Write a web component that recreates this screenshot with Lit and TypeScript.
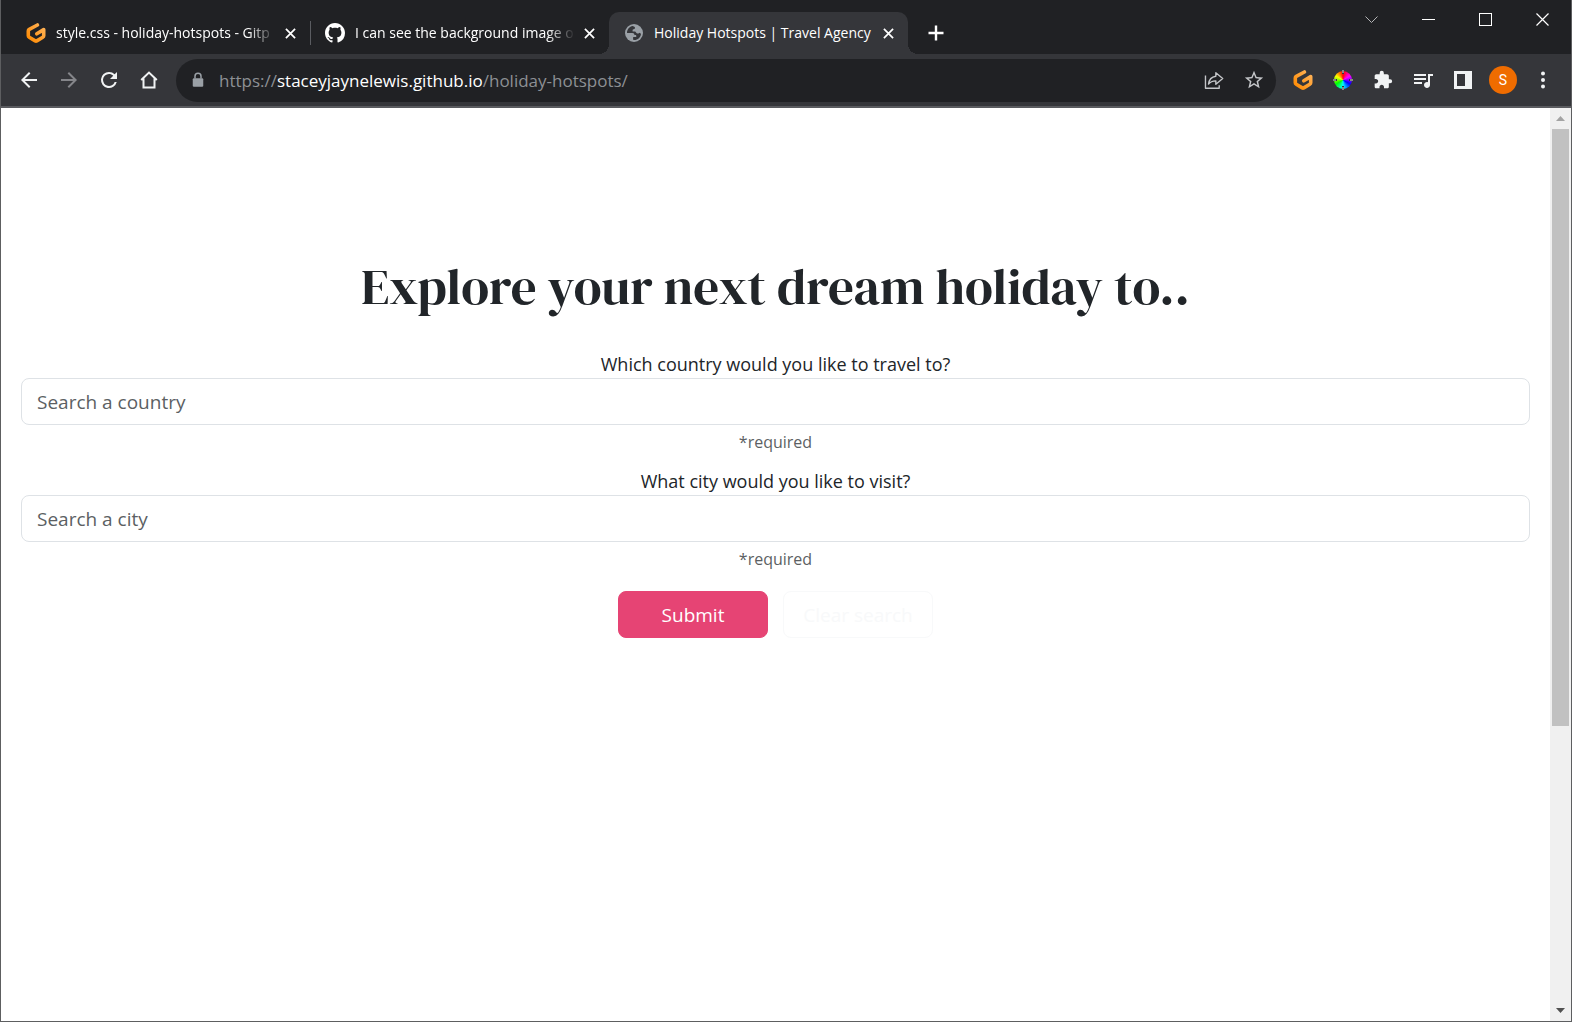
import { LitElement, html, svg, css, type TemplateResult } from "lit";
import { customElement, property, state } from "lit/decorators.js";

const material = (d: string) => svg`<path fill="currentColor" d=${d}></path>`;

const ICONS: Record<string, { box: string; body: TemplateResult<2> }> = {
  back: {
    box: "0 0 24 24",
    body: material("M20 11H7.83l5.59-5.59L12 4l-8 8 8 8 1.41-1.41L7.83 13H20v-2z"),
  },
  forward: {
    box: "0 0 24 24",
    body: material("M4 11h12.17l-5.59-5.59L12 4l8 8-8 8-1.41-1.41L16.17 13H4v-2z"),
  },
  reload: {
    box: "0 0 24 24",
    body: material(
      "M17.65 6.35A7.96 7.96 0 0 0 12 4a8 8 0 1 0 7.73 10h-2.08A6 6 0 1 1 12 6c1.66 0 3.14.69 4.22 1.78L13 11h7V4l-2.35 2.35z",
    ),
  },
  home: {
    box: "0 0 24 24",
    body: svg`<path fill="none" stroke="currentColor" stroke-width="2" d="M4.2 12 12 4.6 19.8 12M6.5 10.5V19.6H17.5V10.5"></path>`,
  },
  lock: {
    box: "0 0 24 24",
    body: svg`<rect x="5" y="9.500" width="14" height="11.500" rx="1.500" fill="currentColor"></rect><path fill="none" stroke="currentColor" stroke-width="2" d="M8 10V7a4 4 0 0 1 8 0v3"></path>`,
  },
  share: {
    box: "0 0 24 24",
    body: svg`<path fill="none" stroke="currentColor" stroke-width="1.500" stroke-linejoin="round" d="M2.700 7v14h15v-3.400M14 4l7.500 6.300-7.500 6.300v-3.700c-3.300 0-6 .9-8 3.600.6-4.800 3.500-8 8-8.600z"></path>`,
  },
  star: {
    box: "0 0 24 24",
    body: material(
      "M22 9.240l-7.190-.62L12 2 9.190 8.630 2 9.240l5.460 4.730L5.820 21 12 17.270 18.180 21l-1.630-7.030L22 9.240zM12 15.400l-3.760 2.270 1-4.280-3.320-2.880 4.380-.38L12 6.100l1.710 4.040 4.380.38-3.320 2.880 1 4.280L12 15.400z",
    ),
  },
  puzzle: {
    box: "0 0 24 24",
    body: material(
      "M20.500 11H19V7c0-1.100-.9-2-2-2h-4V3.500a2.500 2.500 0 0 0-5 0V5H4c-1.100 0-1.990.9-1.990 2v3.800H3.500c1.490 0 2.700 1.210 2.700 2.700s-1.210 2.700-2.700 2.700H2V20c0 1.100.9 2 2 2h3.800v-1.500c0-1.490 1.210-2.700 2.700-2.700s2.700 1.210 2.700 2.700V22H17c1.100 0 2-.9 2-2v-4h1.500a2.500 2.500 0 0 0 0-5z",
    ),
  },
  queue: {
    box: "0 0 24 24",
    body: material(
      "M15 6H3v2h12V6zm0 4H3v2h12v-2zM3 16h8v-2H3v2zM17 6v8.180c-.31-.11-.65-.18-1-.18-1.660 0-3 1.340-3 3s1.340 3 3 3 3-1.340 3-3V8h3V6h-5z",
    ),
  },
  panel: {
    box: "0 0 18 18",
    body: svg`<path fill="currentColor" fill-rule="evenodd" d="M0 0h18v18H0zM3 3v12h8V3z"></path>`,
  },
  dots: {
    box: "0 0 24 24",
    body: svg`<g fill="currentColor"><circle cx="12" cy="5.500" r="2"></circle><circle cx="12" cy="12" r="2"></circle><circle cx="12" cy="18.500" r="2"></circle></g>`,
  },
  close: {
    box: "0 0 12 12",
    body: svg`<path stroke="currentColor" stroke-width="1.900" d="M1 1l10 10M11 1L1 11"></path>`,
  },
  plus: {
    box: "0 0 16 16",
    body: svg`<path stroke="currentColor" stroke-width="2.400" d="M8 0.500v15M0.500 8h15"></path>`,
  },
  chevron: {
    box: "0 0 13 13",
    body: svg`<path fill="none" stroke="currentColor" d="M0.500 3.500l6 6 6-6"></path>`,
  },
  minimize: { box: "0 0 13 13", body: svg`<path fill="currentColor" d="M0 6h13v1H0z"></path>` },
  maximize: {
    box: "0 0 13 13",
    body: svg`<rect x="0.500" y="0.500" width="12" height="12" fill="none" stroke="currentColor"></rect>`,
  },
  exit: {
    box: "0 0 13 13",
    body: svg`<path stroke="currentColor" stroke-width="1.200" d="M0.500 0.500l12 12M12.500 0.500l-12 12"></path>`,
  },
  gitpod: {
    box: "0 0 20 20",
    body: svg`<defs><linearGradient id="g" x1="1" y1="0" x2="0" y2="1"><stop offset="0" stop-color="#ffb45b"></stop><stop offset="1" stop-color="#ff8a00"></stop></linearGradient></defs><path fill="none" stroke="url(#g)" stroke-width="3.600" stroke-linejoin="round" stroke-linecap="round" d="M11.400 2 3.300 6.300Q2.300 6.900 2.300 8v4.800q0 1 .9 1.500l6 3.600q.8.400 1.600 0l6-3.600q.9-.5.900-1.500V6.600l-6.900 4.200"></path>`,
  },
  github: {
    box: "0 0 16 16",
    body: material(
      "M8 0C3.580 0 0 3.580 0 8c0 3.540 2.290 6.530 5.470 7.590.4.070.55-.17.55-.38 0-.19-.01-.82-.01-1.490-2.010.37-2.530-.49-2.690-.94-.09-.23-.48-.94-.82-1.130-.28-.15-.68-.52-.01-.53.63-.01 1.080.58 1.230.82.72 1.210 1.870.87 2.330.66.07-.52.28-.87.51-1.070-1.780-.2-3.640-.89-3.640-3.950 0-.87.31-1.590.82-2.150-.08-.2-.36-1.020.08-2.120 0 0 .67-.21 2.200.82.64-.18 1.320-.27 2-.27s1.360.09 2 .27c1.530-1.040 2.200-.82 2.200-.82.44 1.100.16 1.920.08 2.120.51.56.82 1.270.82 2.150 0 3.070-1.870 3.750-3.650 3.950.29.25.54.73.54 1.480 0 1.070-.01 1.930-.01 2.200 0 .21.15.46.55.38A8.010 8.010 0 0 0 16 8c0-4.420-3.580-8-8-8z",
    ),
  },
  globe: {
    box: "0 0 20 20",
    body: svg`<circle cx="10" cy="10" r="9" fill="#9aa0a6"></circle><path fill="#35363a" d="M8.700 3C5.500 3.500 3 6.400 3 9.900l5.400.1c1.300 0 2 .7 2 1.900h1.700l.2 2H9.200l-.2 2.900c3.900.9 7.800-2.200 8-6.100l-1.700-1c-.6 1-1.800 1.200-2.600.5L11.200 8.500H8.600V6.700L11 5.500 10.800 4z"></path>`,
  },
};

@customElement("ui-icon")
class UiIcon extends LitElement {
  @property() name = "";
  static styles = css`
    :host {
      display: block;
      width: 24px;
      height: 24px;
      flex: none;
    }
    .glyph {
      display: block;
      width: 100%;
      height: 100%;
    }
  `;
  render() {
    const icon = ICONS[this.name];
    return html`<svg class="glyph" viewBox=${icon.box} aria-hidden="true">${icon.body}</svg>`;
  }
}

interface Tab {
  icon: string;
  title: string;
}

@customElement("browser-tabs")
class BrowserTabs extends LitElement {
  @state() private active = 2;
  private tabs: Tab[] = [
    { icon: "gitpod", title: "style.css - holiday-hotspots - Gitp" },
    { icon: "github", title: "I can see the background image o" },
    { icon: "globe", title: "Holiday Hotspots | Travel Agency" },
  ];

  static styles = css`
    :host {
      display: flex;
      height: 54px;
      padding-left: 10px;
      box-sizing: border-box;
      background: #202124;
      color: #fff;
    }
    button {
      border: 0;
      padding: 0;
      margin: 0;
      background: none;
      color: inherit;
      font: inherit;
    }
    .tabs {
      display: flex;
      align-items: flex-end;
      flex: 1;
      min-width: 0;
    }
    .tab {
      position: relative;
      display: flex;
      align-items: center;
      flex: 0 1 299px;
      min-width: 0;
      height: 42px;
      padding: 0 8px 0 15px;
      box-sizing: border-box;
      border-radius: 10px 10px 0 0;
    }
    .tab.active {
      background: #35363a;
    }
    .tab.active::before,
    .tab.active::after {
      content: "";
      position: absolute;
      bottom: 0;
      width: 10px;
      height: 10px;
    }
    .tab.active::before {
      left: -10px;
      background: radial-gradient(circle at 0 0, transparent 10px, #35363a 10px);
    }
    .tab.active::after {
      right: -10px;
      background: radial-gradient(circle at 100% 0, transparent 10px, #35363a 10px);
    }
    .tab.divided::after {
      content: "";
      position: absolute;
      right: -1px;
      top: 9px;
      width: 1px;
      height: 24px;
      background: #5a5c61;
    }
    .select {
      display: flex;
      align-items: center;
      flex: 1;
      gap: 10px;
      min-width: 0;
      height: 100%;
      text-align: left;
    }
    .favicon {
      width: 20px;
      height: 20px;
    }
    .title {
      flex: 1;
      overflow: hidden;
      white-space: nowrap;
      font-size: 14px;
      line-height: 24px;
      -webkit-mask-image: linear-gradient(to left, transparent 2px, #000 30px);
      mask-image: linear-gradient(to left, transparent 2px, #000 30px);
    }
    .active .title {
      -webkit-mask-image: none;
      mask-image: none;
    }
    .close {
      display: grid;
      place-items: center;
      width: 24px;
      height: 24px;
    }
    .close-icon {
      width: 11px;
      height: 11px;
    }
    .add {
      display: grid;
      place-items: center;
      width: 36px;
      height: 42px;
      margin-left: 10px;
    }
    .plus {
      width: 16px;
      height: 16px;
    }
    .controls {
      display: flex;
      height: 38px;
    }
    .control {
      display: grid;
      place-items: center;
      width: 57px;
    }
    .control-icon {
      width: 13px;
      height: 13px;
    }
    .control.dim {
      color: #b4b5b7;
    }
  `;

  render() {
    return html`
      <div class="tabs">
        ${this.tabs.map(
          (tab, i) => html`
            <div class="tab ${i === this.active ? "active" : i + 1 !== this.active ? "divided" : ""}">
              <button class="select" @click=${() => (this.active = i)}>
                <ui-icon class="favicon" name=${tab.icon}></ui-icon>
                <span class="title">${tab.title}</span>
              </button>
              <button class="close" aria-label="Close tab">
                <ui-icon class="close-icon" name="close"></ui-icon>
              </button>
            </div>
          `,
        )}
        <button class="add" aria-label="New tab"><ui-icon class="plus" name="plus"></ui-icon></button>
      </div>
      <div class="controls">
        ${[
          ["chevron", "Search tabs"],
          ["minimize", "Minimize"],
          ["maximize", "Maximize"],
          ["exit", "Close"],
        ].map(
          ([icon, label]) => html`
            <button class="control ${icon === "chevron" ? "dim" : ""}" aria-label=${label}>
              <ui-icon class="control-icon" name=${icon}></ui-icon>
            </button>
          `,
        )}
      </div>
    `;
  }
}

@customElement("browser-toolbar")
class BrowserToolbar extends LitElement {
  static styles = css`
    :host {
      display: flex;
      align-items: center;
      height: 52px;
      padding: 0 8px;
      box-sizing: border-box;
      background: #35363a;
      color: #f1f3f4;
    }
    .tool {
      display: grid;
      place-items: center;
      flex: none;
      width: 40px;
      height: 40px;
      border: 0;
      padding: 0;
      background: none;
      color: inherit;
      font: inherit;
    }
    .tool.disabled {
      color: #85868a;
    }
    .omnibox {
      display: flex;
      align-items: center;
      flex: 1;
      min-width: 0;
      height: 43px;
      margin: 0 7px;
      padding: 0 2px 0 13px;
      box-sizing: border-box;
      border-radius: 22px;
      background: #202124;
      color: #c4c6c9;
    }
    .lock {
      width: 18px;
      height: 18px;
      color: #9aa0a6;
    }
    .url {
      flex: 1;
      min-width: 0;
      margin-left: 12px;
      overflow: hidden;
      white-space: nowrap;
      outline: 0;
      font-size: 17px;
      line-height: 29px;
      color: #8d9094;
    }
    .domain {
      color: #fff;
    }
    .small {
      width: 20px;
      height: 20px;
    }
    .panel {
      width: 18px;
      height: 18px;
    }
    .medium {
      width: 22px;
      height: 22px;
    }
    .wheel {
      position: relative;
      width: 18px;
      height: 18px;
      border-radius: 50%;
      background: conic-gradient(red, magenta, blue, cyan, lime, yellow, red);
    }
    .crosshair {
      position: absolute;
      inset: -1px;
      width: 20px;
      height: 20px;
    }
    .avatar {
      display: grid;
      place-items: center;
      width: 28px;
      height: 28px;
      border-radius: 50%;
      background: #ef6c00;
      color: #fff;
      font: 14px/28px Roboto, sans-serif;
    }
  `;

  private tool(icon: string, label: string, size = "") {
    return html`<button class="tool ${icon === "forward" ? "disabled" : ""}" aria-label=${label}>
      <ui-icon class=${size} name=${icon}></ui-icon>
    </button>`;
  }

  render() {
    return html`
      ${this.tool("back", "Back")} ${this.tool("forward", "Forward")} ${this.tool("reload", "Reload")}
      ${this.tool("home", "Home")}
      <div class="omnibox">
        <ui-icon class="lock" name="lock"></ui-icon>
        <div class="url" role="textbox" aria-label="Address" contenteditable="true" spellcheck="false"
          >https://<span class="domain">staceyjaynelewis.github.io</span>/holiday-hotspots/</div
        >
        ${this.tool("share", "Share", "medium")} ${this.tool("star", "Bookmark", "medium")}
      </div>
      ${this.tool("gitpod", "Gitpod", "small")}
      <button class="tool" aria-label="Color picker">
        <span class="wheel">
          <svg class="crosshair" viewBox="0 0 20 20" aria-hidden="true">
            <path stroke="#333" stroke-width="2" d="M10 0v4M10 16v4M0 10h4M16 10h4"></path>
            <path stroke="#ddd" stroke-width="1" d="M10 0v3M10 17v3M0 10h3M17 10h3"></path>
          </svg>
        </span>
      </button>
      ${this.tool("puzzle", "Extensions", "small")} ${this.tool("queue", "Media")}
      ${this.tool("panel", "Side panel", "panel")}
      <button class="tool" aria-label="Profile"><span class="avatar">S</span></button>
      ${this.tool("dots", "Menu")}
    `;
  }
}

@customElement("holiday-page")
class HolidayPage extends LitElement {
  private fields = [
    { id: "country", label: "Which country would you like to travel to?", hint: "Search a country" },
    { id: "city", label: "What city would you like to visit?", hint: "Search a city" },
  ];

  static styles = css`
    :host {
      display: block;
      padding: 147px 20px 40px;
      box-sizing: border-box;
      background: #fff;
      color: #212529;
      text-align: center;
    }
    .heading {
      margin: 0 0 33px;
      font: 500 51px/62px "DM Serif Display", "Liberation Serif", serif;
    }
    .field {
      margin-bottom: 13px;
    }
    .label {
      display: block;
      font-size: 18px;
      line-height: 28px;
    }
    .input {
      display: block;
      width: 100%;
      height: 47px;
      padding: 0 15px;
      box-sizing: border-box;
      border: 1px solid #dee2e6;
      border-radius: 8px;
      background: #fff;
      color: inherit;
      font: inherit;
      font-size: 19px;
    }
    .input::placeholder {
      color: #5c5f63;
      opacity: 1;
    }
    .help {
      margin-top: 5px;
      font-size: 16px;
      line-height: 24px;
      color: #5c5f63;
    }
    .actions {
      display: flex;
      justify-content: center;
      gap: 15px;
      padding-top: 7px;
    }
    .button {
      width: 150px;
      height: 47px;
      padding: 0;
      border: 1px solid #e64474;
      border-radius: 8px;
      background: #e64474;
      color: #fff;
      font: inherit;
      font-size: 19px;
    }
    .button.outline {
      border-color: #f8f9fa;
      background: #fff;
      color: #f8f9fa;
    }
  `;

  render() {
    return html`
      <h1 class="heading">Explore your next dream holiday to..</h1>
      <form @submit=${(e: Event) => e.preventDefault()}>
        ${this.fields.map(
          (f) => html`
            <div class="field">
              <label class="label" for=${f.id}>${f.label}</label>
              <input class="input" id=${f.id} type="text" placeholder=${f.hint} aria-describedby="${f.id}-help" />
              <div class="help" id="${f.id}-help">*required</div>
            </div>
          `,
        )}
        <div class="actions">
          <button class="button" type="submit">Submit</button>
          <button class="button outline" type="reset">Clear search</button>
        </div>
      </form>
    `;
  }
}

@customElement("app-root")
class AppRoot extends LitElement {
  static styles = css`
    :host {
      display: flex;
      flex-direction: column;
      min-height: 100vh;
      box-sizing: border-box;
      border: 1px solid #5d5e60;
      border-top: 0;
      background: #fff;
      font-family: "Segoe UI", "Open Sans", "Noto Sans", sans-serif;
    }
    .viewport {
      display: flex;
      flex: 1;
      border-top: 2px solid #5a5b5f;
    }
    .page {
      flex: 1;
      min-width: 0;
    }
    .scrollbar {
      display: flex;
      flex-direction: column;
      width: 21px;
      background: #f0f0f0;
    }
    .arrow {
      display: grid;
      place-items: center;
      height: 21px;
      flex: none;
      color: #a3a3a3;
    }
    .arrow.down {
      color: #505050;
    }
    .track {
      display: flex;
      flex-direction: column;
      flex: 1;
      padding: 0 2px;
    }
    .thumb {
      flex: 597;
      background: #c1c1c1;
    }
    .rest {
      flex: 274;
    }
    .triangle {
      display: block;
      width: 9px;
      height: 5px;
    }
  `;

  render() {
    return html`
      <browser-tabs></browser-tabs>
      <browser-toolbar></browser-toolbar>
      <div class="viewport">
        <holiday-page class="page"></holiday-page>
        <div class="scrollbar" aria-hidden="true">
          <span class="arrow">
            <svg class="triangle" viewBox="0 0 9 5"><path fill="currentColor" d="M0 5L4.500 0 9 5z"></path></svg>
          </span>
          <div class="track"><div class="thumb"></div><div class="rest"></div></div>
          <span class="arrow down">
            <svg class="triangle" viewBox="0 0 9 5"><path fill="currentColor" d="M0 0h9L4.500 5z"></path></svg>
          </span>
        </div>
      </div>
    `;
  }
}
